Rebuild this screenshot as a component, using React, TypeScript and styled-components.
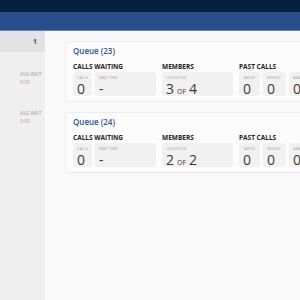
import React from "react";
import styled, { createGlobalStyle } from "styled-components";

const Global = createGlobalStyle`
  html, body { margin: 0; padding: 0; }
  body {
    font-family: "Open Sans", "Liberation Sans", sans-serif;
    background: #f9f9f9;
    overflow: hidden;
    width: 300px;
    height: 300px;
  }
  #root { height: 300px; }
`;

const Page = styled.div`
  display: flex;
  flex-direction: column;
  height: 300px;
  width: 300px;
  overflow: hidden;
`;

const TopBar = styled.div`
  height: 12px;
  background: #03203f;
  flex-shrink: 0;
`;

const NavBar = styled.div`
  height: 18px;
  background: #274d8c;
  border-bottom: 1px solid #6583b9;
  flex-shrink: 0;
`;

const Body = styled.div`
  flex: 1;
  display: flex;
  min-height: 0;
`;

const Sidebar = styled.div`
  width: 45px;
  flex-shrink: 0;
  background: #efefef;
  display: flex;
  flex-direction: column;
`;

const SideHeader = styled.div`
  height: 21px;
  background: #e3e3e3;
  display: flex;
  align-items: center;
  justify-content: flex-end;
  padding-right: 8px;
  font-size: 7px;
  font-weight: 700;
  color: #555;
`;

const SideItem = styled.div`
  height: 39px;
  box-sizing: border-box;
  padding: 20px 0 0 20px;
  display: flex;
  flex-direction: column;
`;

const SideLabel = styled.span`
  font-size: 4.5px;
  line-height: 5px;
  color: #9a9a9a;
  letter-spacing: 0.1px;
`;

const SideValue = styled.span`
  font-size: 5px;
  line-height: 6px;
  margin-top: 2px;
  color: #b9a27c;
`;

const Main = styled.div`
  flex: 1;
  min-width: 0;
  overflow: hidden;
  background: #f9f9f9;
  padding: 10px 0 0 20px;
  display: flex;
  flex-direction: column;
  gap: 10px;
`;

const Card = styled.div`
  width: 330px;
  flex-shrink: 0;
  box-sizing: border-box;
  background: #fcfcfc;
  border: 1px solid #ececec;
  border-radius: 4px;
  padding: 4px 7px 5px 7px;
`;

const CardTitle = styled.div`
  font-size: 8px;
  line-height: 10px;
  font-weight: 600;
  color: #2e5496;
`;

const Groups = styled.div`
  display: flex;
  gap: 6px;
  margin-top: 7px;
`;

const Group = styled.div`
  display: flex;
  flex-direction: column;
`;

const GroupTitle = styled.div`
  font-size: 6.5px;
  line-height: 8px;
  font-weight: 700;
  color: #222;
  margin-bottom: 1px;
`;

const Boxes = styled.div`
  display: flex;
  gap: 3px;
`;

const StatBox = styled.div<{ $w: number }>`
  width: ${(p) => p.$w}px;
  height: 24px;
  box-sizing: border-box;
  background: #f1f1f1;
  border-radius: 3px;
  padding: 3px 0 0 4px;
  display: flex;
  flex-direction: column;
`;

const StatLabel = styled.span`
  font-size: 3.8px;
  line-height: 5px;
  color: #a8a8a8;
  white-space: nowrap;
`;

const StatValue = styled.span`
  font-size: 14px;
  line-height: 13px;
  color: #3a3a3a;
  white-space: nowrap;
  margin-top: 2px;
`;

const Of = styled.span`
  font-size: 7px;
  margin: 0 3px;
`;

type Stat = { label: string; value: React.ReactNode; w: number };

const QueueCard = ({ name, members }: { name: string; members: [number, number] }) => {
  const groups: { title: string; stats: Stat[] }[] = [
    {
      title: "CALLS WAITING",
      stats: [
        { label: "CALLS", value: "0", w: 19 },
        { label: "WAIT TIME", value: "-", w: 61 },
      ],
    },
    {
      title: "MEMBERS",
      stats: [
        {
          label: "LOGGED IN",
          value: (
            <>
              {members[0]}
              <Of>OF</Of>
              {members[1]}
            </>
          ),
          w: 71,
        },
      ],
    },
    {
      title: "PAST CALLS",
      stats: [
        { label: "TAKEN", value: "0", w: 21 },
        { label: "MISSED", value: "0", w: 23 },
        { label: "ABANDONED", value: "0", w: 30 },
      ],
    },
  ];
  return (
    <Card>
      <CardTitle>{name}</CardTitle>
      <Groups>
        {groups.map((g) => (
          <Group key={g.title}>
            <GroupTitle>{g.title}</GroupTitle>
            <Boxes>
              {g.stats.map((s) => (
                <StatBox key={s.label} $w={s.w}>
                  <StatLabel>{s.label}</StatLabel>
                  <StatValue>{s.value}</StatValue>
                </StatBox>
              ))}
            </Boxes>
          </Group>
        ))}
      </Groups>
    </Card>
  );
};

export default function App() {
  return (
    <>
      <Global />
      <Page>
        <TopBar />
        <NavBar />
        <Body>
          <Sidebar>
            <SideHeader>1</SideHeader>
            <SideItem>
              <SideLabel>AVG WAIT</SideLabel>
              <SideValue>0:00</SideValue>
            </SideItem>
            <SideItem>
              <SideLabel>AVG WAIT</SideLabel>
              <SideValue>0:00</SideValue>
            </SideItem>
          </Sidebar>
          <Main>
            <QueueCard name="Queue (23)" members={[3, 4]} />
            <QueueCard name="Queue (24)" members={[2, 2]} />
          </Main>
        </Body>
      </Page>
    </>
  );
}
